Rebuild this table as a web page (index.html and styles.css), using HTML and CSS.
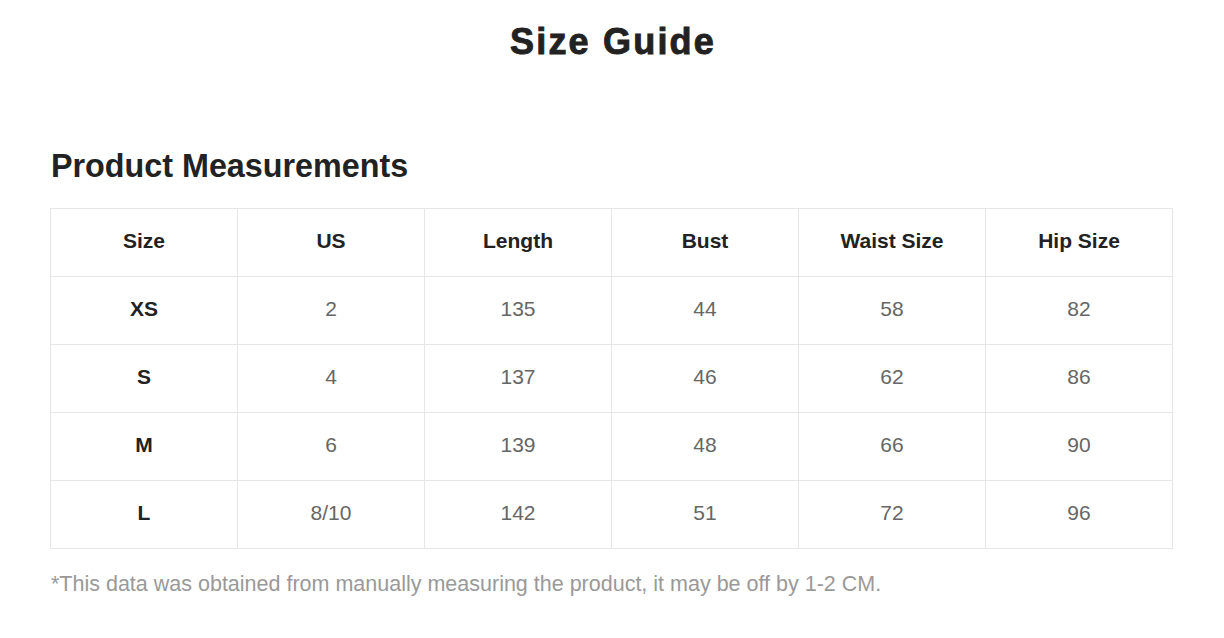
FILE: index.html
```html
<!DOCTYPE html>
<html lang="en">
<head>
<meta charset="utf-8">
<title>Size Guide</title>
<link rel="stylesheet" href="styles.css">
</head>
<body>
<main class="page">
  <h1 class="title">Size Guide</h1>
  <h2 class="section-title">Product Measurements</h2>
  <table class="size-table">
    <thead>
      <tr><th>Size</th><th>US</th><th>Length</th><th>Bust</th><th>Waist Size</th><th>Hip Size</th></tr>
    </thead>
    <tbody>
      <tr><th>XS</th><td>2</td><td>135</td><td>44</td><td>58</td><td>82</td></tr>
      <tr><th>S</th><td>4</td><td>137</td><td>46</td><td>62</td><td>86</td></tr>
      <tr><th>M</th><td>6</td><td>139</td><td>48</td><td>66</td><td>90</td></tr>
      <tr><th>L</th><td>8/10</td><td>142</td><td>51</td><td>72</td><td>96</td></tr>
    </tbody>
  </table>
  <p class="note">*This data was obtained from manually measuring the product, it may be off by 1-2 CM.</p>
</main>
</body>
</html>
```

FILE: styles.css
```css
html, body {
  margin: 0;
  padding: 0;
  background: #ffffff;
}

body {
  font-family: "Liberation Sans", Arial, sans-serif;
  color: #222222;
}

.page {
  padding: 20px 51px 0 50px;
}

.title {
  margin: 0 0 0 3px;
  text-align: center;
  font-size: 36px;
  line-height: 44px;
  font-weight: 700;
  letter-spacing: 2.2px;
  -webkit-text-stroke: 0.9px #222222;
  color: #222222;
}

.section-title {
  margin: 83px 0 0 1px;
  font-size: 32.3px;
  line-height: 38px;
  font-weight: 700;
  color: #222222;
}

.size-table {
  margin-top: 23px;
  width: 100%;
  border-collapse: collapse;
  table-layout: fixed;
}

.size-table th,
.size-table td {
  border: 1px solid #e6e6e6;
  height: 64px;
  padding: 0 0 3px 0;
  text-align: center;
  vertical-align: middle;
  font-size: 21px;
}

.size-table th {
  font-weight: 700;
  color: #222222;
}

.size-table td {
  font-weight: 400;
  color: #666666;
}

.note {
  margin: 22px 0 0 1px;
  font-size: 21.5px;
  line-height: 26px;
  color: #999999;
}
```
